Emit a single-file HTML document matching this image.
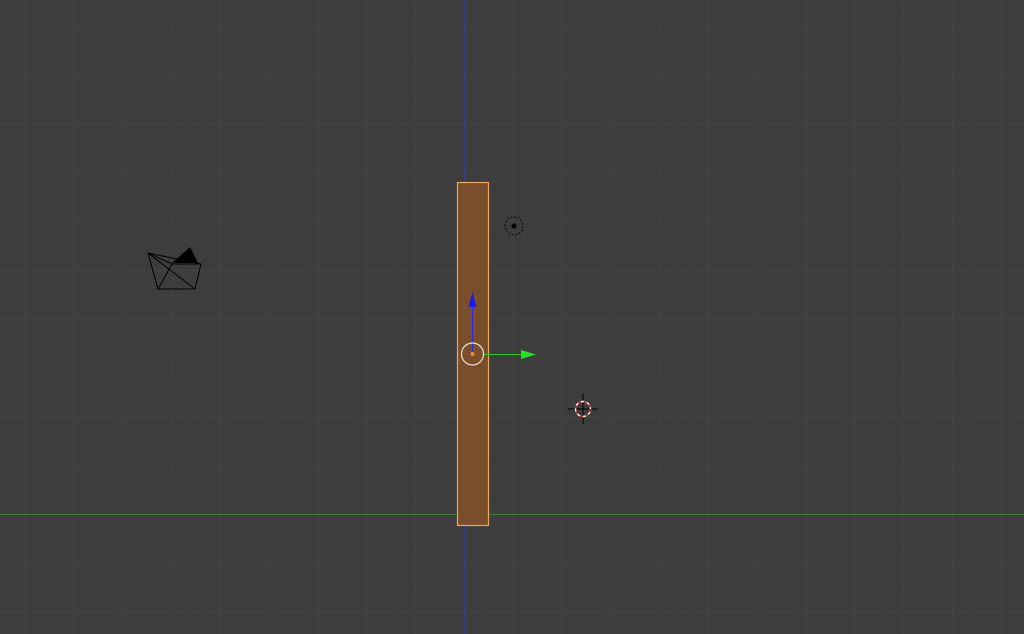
<!DOCTYPE html>
<html><head><style>html,body{margin:0;padding:0;background:#3d3d3d;overflow:hidden}</style></head>
<body>
<svg width="1024" height="634" viewBox="0 0 1024 634" xmlns="http://www.w3.org/2000/svg" style="display:block">
<defs>
<pattern id="minor" x="464" y="514" width="9.76" height="9.76" patternUnits="userSpaceOnUse">
<path d="M0 0V9.76M0 0H9.76" stroke="#3f3f3f" stroke-width="1" fill="none"/>
</pattern>
<pattern id="major" x="464" y="514" width="48.8" height="48.8" patternUnits="userSpaceOnUse">
<path d="M0.5 0V48.8M0 0.5H48.8" stroke="#434343" stroke-width="1" fill="none"/>
</pattern>
</defs>
<rect width="1024" height="634" fill="#3d3d3d"/>
<rect width="1024" height="634" fill="url(#minor)"/>
<rect width="1024" height="634" fill="url(#major)"/>
<line x1="0" y1="514.5" x2="1024" y2="514.5" stroke="#3f7a3a" stroke-width="1"/>
<line x1="464.5" y1="0" x2="464.5" y2="634" stroke="#3a3a8a" stroke-width="1"/>
<g stroke="#000" stroke-width="1" fill="none">
<path d="M148 253L201 264L195 289L158 289Z"/>
<path d="M148 253L172 264H201"/>
<path d="M148 253L195 289"/>
<path d="M172 264L158 289"/>
</g>
<path d="M172 263L190 247L198 263Z" fill="#000"/>
<circle cx="514" cy="226" r="9" fill="none" stroke="#111" stroke-width="1.2" stroke-dasharray="2 1.5"/>
<circle cx="514" cy="226" r="2.5" fill="#000"/>
<rect x="457.5" y="182.5" width="31" height="343" fill="#7a4e2b" stroke="#e9a85e" stroke-width="1.2"/>
<line x1="472.5" y1="354" x2="472.5" y2="305" stroke="#2a2ae0" stroke-width="1"/>
<path d="M468.5 307L472.5 292L476.5 307Z" fill="#1a1ae8"/>
<line x1="484" y1="354.5" x2="523" y2="354.5" stroke="#22d022" stroke-width="1"/>
<path d="M521 350L536 354.5L521 359Z" fill="#22e022"/>
<circle cx="472.5" cy="354" r="11" fill="none" stroke="#e8e0d0" stroke-width="1.2"/>
<circle cx="472.5" cy="354" r="2" fill="#f09020"/>
<g stroke="#000" stroke-width="1">
<line x1="583" y1="394" x2="583" y2="424"/>
<line x1="568" y1="409" x2="598" y2="409"/>
</g>
<circle cx="583" cy="409" r="7.5" fill="none" stroke="#fff" stroke-width="1.4"/>
<circle cx="583" cy="409" r="7.5" fill="none" stroke="#c02020" stroke-width="1.4" stroke-dasharray="3 3"/>
</svg>
</body></html>
